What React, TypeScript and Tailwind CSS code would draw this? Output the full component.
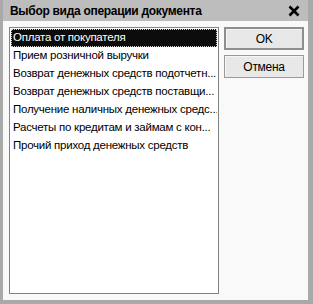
import React, { useState } from 'react';

const items = [
  'Оплата от покупателя',
  'Прием розничной выручки',
  'Возврат денежных средств подотчетн...',
  'Возврат денежных средств поставщи...',
  'Получение наличных денежных средс...',
  'Расчеты по кредитам и займам с кон...',
  'Прочий приход денежных средств',
];

export default function App() {
  const [selected, setSelected] = useState(0);

  return (
    <div className="w-[313px] h-[304px] flex flex-col bg-[#f9f9f9] border-l-[3px] border-r-[5px] border-b-[4px] border-[#a9a9a9] font-['Liberation_Sans',Arial,sans-serif] text-black select-none">
      {/* title bar */}
      <div className="h-[21px] shrink-0 flex items-center justify-between bg-[#bdbdbd] pl-[7px] pr-[8px]">
        <span className="text-[12px] font-bold leading-none tracking-[-0.3px]">Выбор вида операции документа</span>
        <svg width="12" height="12" viewBox="0 0 12 12">
          <path d="M1.5 1.5 L10.5 10.5 M10.5 1.5 L1.5 10.5" stroke="#000" strokeWidth="2.6" />
        </svg>
      </div>

      {/* body */}
      <div className="flex-1 flex pl-[6px] pr-[4px] pt-[6px] pb-[6px] gap-[5px]">
        <div className="w-[210px] bg-white border border-[#828282] p-px">
          {items.map((item, i) => (
            <div
              key={item}
              onClick={() => setSelected(i)}
              className={
                i === selected
                  ? 'h-[18px] flex items-center px-[2px] text-[11.5px] tracking-[-0.25px] whitespace-nowrap overflow-hidden bg-[#0c0c0c] text-white outline-1 outline-dotted outline-[#d0d0d0] -outline-offset-1'
                  : 'h-[18px] flex items-center px-[2px] text-[11.5px] tracking-[-0.25px] whitespace-nowrap overflow-hidden'
              }
            >
              {item}
            </div>
          ))}
        </div>

        <div className="w-[80px] flex flex-col gap-[5px]">
          <button className="h-[23px] bg-[#e8e8e8] border-2 border-[#8e8e8e] shadow-[inset_1px_1px_0_#f4f4f4] text-[12px] tracking-[-0.3px]">
            OK
          </button>
          <button className="h-[23px] bg-[#e8e8e8] border border-[#9a9a9a] shadow-[inset_1px_1px_0_#f6f6f6] text-[12px] tracking-[-0.3px]">
            Отмена
          </button>
        </div>
      </div>
    </div>
  );
}
